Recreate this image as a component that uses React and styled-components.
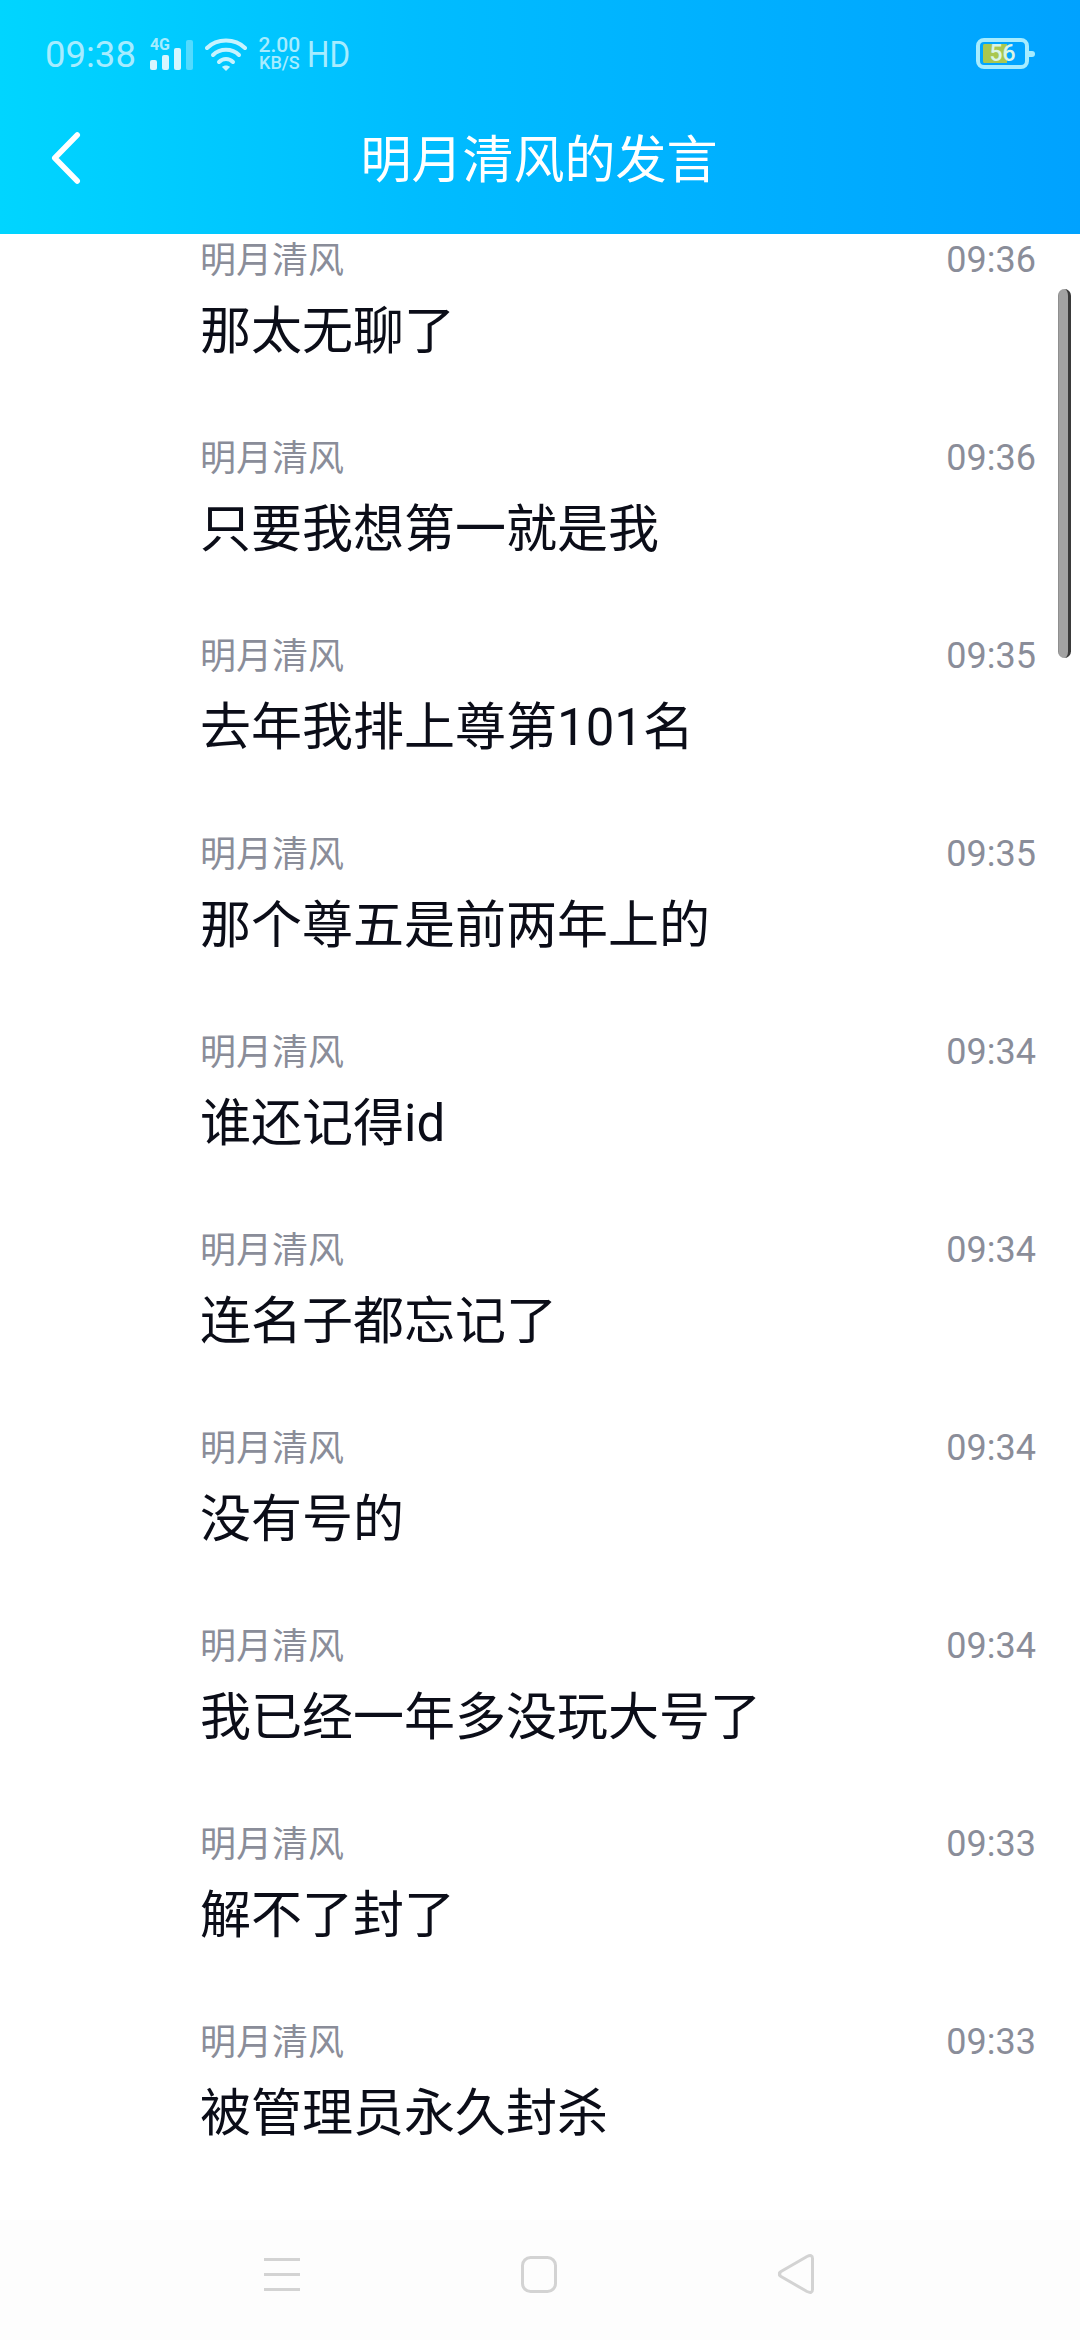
import React from "react";
import styled, { createGlobalStyle } from "styled-components";

const Global = createGlobalStyle`
  html, body { margin: 0; padding: 0; background: #fff; }
  body { font-family: "Noto Sans CJK SC", "Noto Sans", sans-serif; }
`;

const Screen = styled.div`
  position: relative;
  width: 1080px;
  height: 2340px;
  overflow: hidden;
  display: flex;
  flex-direction: column;
  background: #fff;
`;

const Header = styled.header`
  height: 234px;
  flex: none;
  display: flex;
  flex-direction: column;
  background: linear-gradient(90deg, #00d5ff 0%, #00bcff 40%, #00a2ff 100%);
`;

const StatusBar = styled.div`
  height: 110px;
  display: flex;
  align-items: center;
  justify-content: space-between;
  padding: 0 51px 0 45px;
  color: #a6ecff;
`;

const StatusGroup = styled.div`
  display: flex;
  align-items: center;
`;

const Clock = styled.span`
  font: 400 36.5px/1 Roboto, sans-serif;
  margin-right: 14px;
`;

const SignalBox = styled.span`
  position: relative;
  display: block;
  width: 43px;
  height: 32px;
  margin-right: 12px;
`;

const NetLabel = styled.span`
  position: absolute;
  left: 0;
  top: -2px;
  font: 700 16px/16px Roboto, sans-serif;
`;

const Speed = styled.span`
  display: flex;
  flex-direction: column;
  align-items: center;
  width: 41px;
  margin: -2px 7px 0 12px;
`;

const SpeedValue = styled.span`
  display: block;
  font: 500 21px/17px Roboto, sans-serif;
`;

const SpeedUnit = styled.span`
  display: block;
  font: 500 18px/17px Roboto, sans-serif;
  white-space: nowrap;
`;

const Hd = styled.span`
  display: block;
  font: 400 36.5px/1 Roboto, sans-serif;
  transform: scaleX(0.86);
  transform-origin: left center;
`;

const Battery = styled.div`
  position: relative;
  width: 53px;
  height: 31px;
  margin-top: -3px;
  box-sizing: border-box;
  border: 4px solid #a6ecff;
  border-radius: 8px;
  padding: 2px 3px;
  display: flex;
  align-items: center;
  justify-content: center;
  font: 500 23px/1 Roboto, sans-serif;
  color: #d9f5e6;
  background: linear-gradient(90deg, #a9c74f 0 60%, transparent 60%);
  background-clip: content-box;
  &::after {
    content: "";
    position: absolute;
    right: -10px;
    top: 9px;
    width: 6px;
    height: 6px;
    border-radius: 0 4px 4px 0;
    background: #a6ecff;
  }
`;

const TitleBar = styled.div`
  height: 84px;
  display: flex;
  align-items: center;
  justify-content: center;
  position: relative;
`;

const BackButton = styled.svg`
  position: absolute;
  left: 50px;
  top: 20px;
`;

const Title = styled.h1`
  margin: 8px 0 0 -2px;
  color: #fff;
  font-size: 51px;
  line-height: 1;
  font-weight: 400;
`;

const List = styled.main`
  flex: 1;
  min-height: 0;
  padding: 0 44px 0 200px;
`;

const Row = styled.article`
  height: 198px;
  display: flex;
  flex-direction: column;
`;

const RowHead = styled.div`
  height: 48px;
  display: flex;
  align-items: center;
  justify-content: space-between;
`;

const Name = styled.span`
  color: #8a8d99;
  font-size: 36px;
  line-height: 1;
  margin-top: -2px;
`;

const Time = styled.span`
  color: #8a8d99;
  font: 400 36px/1 Roboto, sans-serif;
  margin-top: 3px;
`;

const Message = styled.p`
  margin: 0;
  padding-top: 20px;
  color: #0b0d18;
  font-size: 51px;
  line-height: 50px;
  font-family: "Noto Sans CJK SC", sans-serif;
`;

const Latin = styled.span`
  font-family: Roboto, sans-serif;
`;

const Scrollbar = styled.div`
  position: absolute;
  left: 1058px;
  top: 289px;
  width: 13px;
  height: 369px;
  box-sizing: border-box;
  border-radius: 7px;
  background: #a2a2a2;
  border-left: 1px solid #8f8f8f;
  border-right: 3px solid #3a3a3a;
`;

const NavBar = styled.nav`
  height: 120px;
  flex: none;
  background: #fdfdfd;
  display: flex;
  align-items: center;
  box-sizing: border-box;
  padding: 0 266px 12px 264px;
  justify-content: space-between;
`;

const data = [
  ["那太无聊了", "09:36"],
  ["只要我想第一就是我", "09:36"],
  [<>去年我排上尊第<Latin>101</Latin>名</>, "09:35"],
  ["那个尊五是前两年上的", "09:35"],
  [<>谁还记得<Latin>id</Latin></>, "09:34"],
  ["连名子都忘记了", "09:34"],
  ["没有号的", "09:34"],
  ["我已经一年多没玩大号了", "09:34"],
  ["解不了封了", "09:33"],
  ["被管理员永久封杀", "09:33"],
];

const Signal = () => (
  <SignalBox>
    <svg width="43" height="32" viewBox="0 0 43 32" fill="#d6f6ff">
      <rect x="0" y="21" width="7" height="10" rx="2" />
      <rect x="12" y="16" width="7" height="15" rx="2" />
      <rect x="24" y="9" width="7" height="22" rx="2" />
      <rect x="36" y="1" width="7" height="30" rx="2" fill="#a6ecff" opacity="0.5" />
    </svg>
    <NetLabel>4G</NetLabel>
  </SignalBox>
);

const Wifi = () => (
  <svg width="42" height="34" viewBox="0 0 42 34" fill="none" stroke="#c6f3ff" strokeWidth="4" strokeLinecap="round">
    <path d="M2 10C12 0 30 0 40 10" />
    <path d="M8 17C15 10 27 10 34 17" />
    <path d="M14 24C18 20 24 20 28 24" />
    <path d="M21 33l-4-4c2-2 6-2 8 0z" fill="#c6f3ff" stroke="none" />
  </svg>
);

export default function App() {
  return (
    <Screen>
      <Global />
      <Header>
        <StatusBar>
          <StatusGroup>
            <Clock>09:38</Clock>
            <Signal />
            <Wifi />
            <Speed>
              <SpeedValue>2.00</SpeedValue>
              <SpeedUnit>KB/S</SpeedUnit>
            </Speed>
            <Hd>HD</Hd>
          </StatusGroup>
          <Battery>56</Battery>
        </StatusBar>
        <TitleBar>
          <BackButton width="32" height="56" viewBox="0 0 32 56" fill="none" stroke="#fff" strokeWidth="5.5" strokeLinecap="round" strokeLinejoin="round">
            <path d="M27.250 5L4.750 28L27.250 51" />
          </BackButton>
          <Title>明月清风的发言</Title>
        </TitleBar>
      </Header>
      <List>
        {data.map(([text, time], i) => (
          <Row key={i}>
            <RowHead>
              <Name>明月清风</Name>
              <Time>{time}</Time>
            </RowHead>
            <Message>{text}</Message>
          </Row>
        ))}
      </List>
      <Scrollbar />
      <NavBar>
        <svg width="36" height="33" viewBox="0 0 36 33" stroke="#d3d3d3" strokeWidth="3">
          <path d="M0 1.500h36M0 16.500h36M0 31.500h36" />
        </svg>
        <svg width="36" height="37" viewBox="0 0 36 37" fill="none" stroke="#d3d3d3" strokeWidth="3">
          <rect x="1.500" y="1.500" width="33" height="34" rx="8" />
        </svg>
        <svg width="37" height="40" viewBox="0 0 37 40" fill="none" stroke="#d3d3d3" strokeWidth="3" strokeLinejoin="round">
          <path d="M3 20Q1.500 19 4 17.500L30 2.500Q35.500 0 35.500 4.500L35.500 35.500Q35.500 40 30 37.500L4 22.500Q1.500 21 3 20z" />
        </svg>
      </NavBar>
    </Screen>
  );
}
